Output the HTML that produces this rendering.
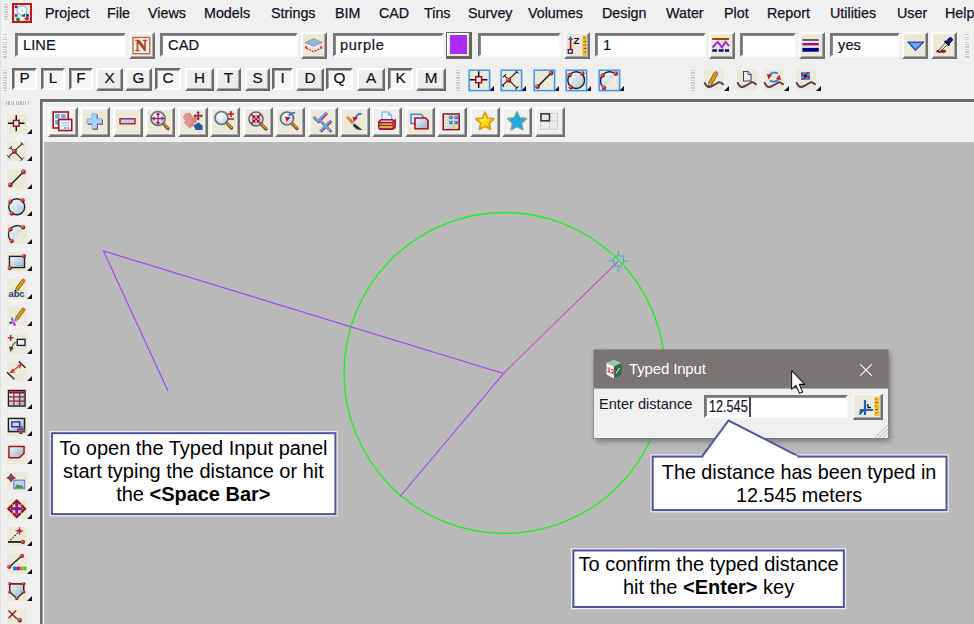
<!DOCTYPE html>
<html><head><meta charset="utf-8"><title>Typed Input</title>
<style>
html,body{margin:0;padding:0}
body{width:974px;height:624px;overflow:hidden;background:#f0f0f0;position:relative;font-family:"Liberation Sans",sans-serif;color:#000}
.a{position:absolute}
.menu span{position:absolute;top:4px;font-size:14.3px;line-height:18px;color:#12101e;white-space:nowrap;-webkit-text-stroke:.25px #12101e}
.grip{position:absolute;width:4px;background:repeating-linear-gradient(180deg,#c6c6c6 0,#cecece 1.200px,#f4f4f4 1.200px,#f4f4f4 2.500px)}
.gripH{position:absolute;height:5px;background:repeating-linear-gradient(90deg,#b2b2b2 0,#bcbcbc 1.200px,#f2f2f2 1.200px,#f2f2f2 2.400px)}
.inp{position:absolute;top:33px;height:20px;background:#fff;border:2px solid;border-color:#777 #fafafa #fafafa #777;box-shadow:inset 1px 1px 0 #8a8a8a;font-size:14.6px;line-height:21px;color:#12101e;-webkit-text-stroke:.2px #12101e;padding-left:6px;box-sizing:content-box;white-space:nowrap;letter-spacing:.1px}
.btn{position:absolute;box-sizing:border-box;background:#ece9d8;border:2px solid;border-color:#fdfdfd #727272 #727272 #fdfdfd;box-shadow:inset -1px -1px 0 #a8a8a8}
.btn.l{background:#f0f0f0}
.lb{position:absolute;top:68px;height:23px;box-sizing:border-box;font-size:15.3px;line-height:16px;text-align:center;color:#12101e;-webkit-text-stroke:.2px #12101e}
.lb.r{background:#ededed;border:2px solid;border-color:#fff #6a6a6a #6a6a6a #fff;box-shadow:inset -1px -1px 0 #a8a8a8;width:27px}
.lb.s{background:#f6f6f6;border:2px solid;border-color:#6a6a6a #fff #fff #6a6a6a;box-shadow:inset 1px 1px 0 #a8a8a8;width:25px;height:22px}
.ic{position:absolute;background:#ece9d8;width:20px;height:20px}
.tri{position:absolute;width:0;height:0;border-left:5px solid transparent;border-bottom:5px solid #111}
.snap{position:absolute;top:70px;width:21px;height:21px;box-sizing:border-box;border:2px solid #4a9cf6;background:#ece9d8}
.call{position:absolute;text-align:center;line-height:23px;color:#000;white-space:nowrap}
svg{position:absolute;overflow:visible}
</style></head><body>

<svg width="0" height="0" style="position:absolute"><defs>
<linearGradient id="gl" x1="0" y1="0" x2="1" y2="1"><stop offset="0" stop-color="#ffffff"/><stop offset="1" stop-color="#a9c4d6"/></linearGradient>
<linearGradient id="gl2" x1="0" y1="0" x2="1" y2="1"><stop offset="0" stop-color="#f4f9fc"/><stop offset="1" stop-color="#8fb0c6"/></linearGradient>
<radialGradient id="rb" cx=".35" cy=".35" r=".7"><stop offset="0" stop-color="#e8848c"/><stop offset=".55" stop-color="#b02838"/><stop offset="1" stop-color="#6a0c18"/></radialGradient>
<radialGradient id="lens" cx=".4" cy=".35" r=".7"><stop offset="0" stop-color="#ffffff"/><stop offset="1" stop-color="#b8d0e2"/></radialGradient>
<linearGradient id="star" x1="0" y1="0" x2="1" y2="1"><stop offset="0" stop-color="#fff9a0"/><stop offset=".5" stop-color="#ffe21a"/><stop offset="1" stop-color="#e8a800"/></linearGradient>
<linearGradient id="hand" x1="0" y1="0" x2="1" y2="1"><stop offset="0" stop-color="#f0b0a8"/><stop offset="1" stop-color="#c87870"/></linearGradient>
<linearGradient id="wood" x1="0" y1="0" x2="1" y2="0"><stop offset="0" stop-color="#e8a050"/><stop offset="1" stop-color="#9a5a20"/></linearGradient>
</defs></svg>
<div class="grip" style="left:3.500px;top:4px;height:16.500px"></div>
<div class="a" style="left:12px;top:3px;width:20px;height:20px;box-sizing:border-box;border:2px solid #cc1414;background:#e4f2f2"></div>
<svg style="left:14px;top:4px" width="16" height="16" viewBox="0 0 16 16" ><circle cx="8" cy="6.500" r="4.800" fill="#fbfdfd" stroke="#9cc4dc" stroke-width="1.600"/><rect x=".8" y="1.500" width="2.600" height="2.600" fill="#80108a"/><rect x=".8" y="10.200" width="2.600" height="2.600" fill="#80108a"/><rect x="12.200" y="10.200" width="2.600" height="2.600" fill="#101088"/><path d="M7 12.300L11 9.500L11 13Z" fill="#1a6a30"/><circle cx="4" cy="15.300" r="1.900" fill="#109020"/><path d="M12.800 12.500L15.300 14.800L12.800 17.100L10.300 14.800Z" fill="#f01010"/><circle cx="8.300" cy="7" r="1" fill="#b8d8b8"/></svg>
<div class="menu"><span style="left:45px">Project</span><span style="left:107px">File</span><span style="left:148px">Views</span><span style="left:204px">Models</span><span style="left:271px">Strings</span><span style="left:335px">BIM</span><span style="left:379px">CAD</span><span style="left:424px">Tins</span><span style="left:468px">Survey</span><span style="left:528px">Volumes</span><span style="left:602px">Design</span><span style="left:666px">Water</span><span style="left:724px">Plot</span><span style="left:767px">Report</span><span style="left:830px">Utilities</span><span style="left:897px">User</span><span style="left:945px">Help</span></div>
<div class="grip" style="left:3px;top:34px;height:24px"></div>
<div class="inp" style="left:15px;width:101px">LINE</div>
<div class="btn l" style="left:129px;top:32px;width:26px;height:27px"></div>
<svg style="left:132px;top:35px" width="20" height="20" viewBox="0 0 20 20" ><rect x="1" y="2.400" width="16.700" height="16.300" fill="#e9f0f3" stroke="#c8683a" stroke-width="1.400"/><text x="9.300" y="16.300" text-anchor="middle" font-family="Liberation Serif,serif" font-weight="bold" font-size="16.500" fill="#b84010" stroke="#b84010" stroke-width=".5">N</text></svg>
<div class="inp" style="left:160px;width:128px">CAD</div>
<div class="btn " style="left:301px;top:32px;width:26px;height:27px"></div>
<svg style="left:304px;top:35px" width="20" height="20" viewBox="0 0 20 20" ><path d="M1 12.500L9.700 8.600L18.400 12.500L9.700 16.700Z" fill="#f6e0e0" stroke="#e01020" stroke-width="1.200" stroke-dasharray="2.200 1"/><path d="M1 10L9.700 6.100L18.400 10L9.700 14Z" fill="#f4f6f8" stroke="#d0d4d8" stroke-width=".5"/><path d="M1 7.500L9.700 3.600L18.400 7.500L9.700 11.500Z" fill="#9cb4cc" stroke="#7890a8" stroke-width=".7"/></svg>
<div class="inp" style="left:333px;width:101px"><span style="letter-spacing:.65px;margin-left:-1px">purple</span></div>
<div class="a" style="left:446px;top:32px;width:26px;height:27px;box-sizing:border-box;background:#ece9d8;border:solid #666;border-width:1px 3px 3px 1px;box-shadow:inset 2px 2px 0 #fff"></div><div class="a" style="left:450px;top:35px;width:17px;height:19px;background:#a92cf8"></div>
<div class="inp" style="left:478px;width:73px"></div>
<div class="btn " style="left:564px;top:32px;width:26px;height:27px"></div>
<svg style="left:567px;top:35px" width="20" height="20" viewBox="0 0 20 20" ><path d="M3.600 14.500V4" stroke="#b01020" stroke-width="1.700"/><path d="M3.600 1L6.200 4.900H1Z" fill="#2a60d0"/><rect x="1.300" y="14.600" width="4" height="3.600" fill="#fff" stroke="#1020a0" stroke-width="1.300"/><path d="M.7 14.600h5.200" stroke="#b01020" stroke-width="1.300"/><text x="6.600" y="8.800" font-family="Liberation Sans,sans-serif" font-weight="bold" font-size="9.800" fill="#111">Z</text><rect x="15.600" y=".6" width="4.100" height="20.200" fill="#eeb838"/><path d="M16.500 3h2M16.500 6.500h3M16.500 10h2M16.500 13.500h3M16.500 17h2" stroke="#8a5a10" stroke-width=".9"/></svg>
<div class="inp" style="left:595px;width:101px">1</div>
<div class="btn " style="left:709px;top:32px;width:26px;height:27px"></div>
<svg style="left:712px;top:35px" width="20" height="20" viewBox="0 0 20 20" ><path d="M.2 4h16.800" stroke="#a04800" stroke-width="2"/><path d="M.5 12.500L5.600 6.900L10 12.300L13.500 6.900L17 11" fill="none" stroke="#a020f0" stroke-width="1.900"/><path d="M.3 15.400h4.600M6.700 15.400h4.900M13 15.400h4" stroke="#00008a" stroke-width="2.500"/></svg>
<div class="inp" style="left:740px;width:46px"></div>
<div class="btn " style="left:799px;top:32px;width:26px;height:27px"></div>
<svg style="left:802px;top:35px" width="20" height="20" viewBox="0 0 20 20" ><path d="M.4 5h16.400" stroke="#3a3a3a" stroke-width="1.500"/><path d="M.4 9.200h16.400" stroke="#a0109a" stroke-width="2.500"/><path d="M.4 14.800h16.400" stroke="#00008a" stroke-width="3.800"/></svg>
<div class="inp" style="left:830px;width:60px">yes</div>
<div class="btn " style="left:902px;top:32px;width:26px;height:27px"></div>
<svg style="left:905px;top:35px" width="20" height="20" viewBox="0 0 20 20" ><path d="M2.600 7H19L10.500 15.800Z" fill="#3a78e0" stroke="#1a3a90" stroke-width=".9"/><path d="M5.500 8.200H16L10.500 13.500Z" fill="#78a8f0"/></svg>
<div class="btn " style="left:931px;top:32px;width:26px;height:27px"></div>
<svg style="left:934px;top:35px" width="20" height="20" viewBox="0 0 20 20" ><ellipse cx="7.200" cy="16.200" rx="5" ry="1.600" fill="#a01020"/><path d="M4.400 15.800L12 7L14.200 9L6 16.500Z" fill="#f0f4f8" stroke="#333" stroke-width=".9"/><path d="M10.500 6L15.500 10.500" stroke="#111" stroke-width="1.800"/><path d="M12 6.500L15 3Q17.500 1.500 18.500 4Q19 5.500 17.500 6.500L14.500 9.500Z" fill="#101880" stroke="#080830" stroke-width=".7"/></svg>
<div class="grip" style="left:965px;top:34px;height:24px"></div>
<div class="grip" style="left:3px;top:70px;height:21px"></div>
<div class="lb s" style="left:12px;width:25px">P</div>
<div class="lb s" style="left:41px;width:24px">L</div>
<div class="lb s" style="left:69px;width:24px">F</div>
<div class="lb r" style="left:96px;width:27px">X</div>
<div class="lb r" style="left:125px;width:27px">G</div>
<div class="lb s" style="left:155px;width:26px">C</div>
<div class="lb r" style="left:185px;width:29px">H</div>
<div class="lb r" style="left:216px;width:25px">T</div>
<div class="lb r" style="left:245px;width:25px">S</div>
<div class="lb s" style="left:272px;width:21px">I</div>
<div class="lb r" style="left:296px;width:28px">D</div>
<div class="lb s" style="left:326px;width:27px">Q</div>
<div class="lb r" style="left:357px;width:28px">A</div>
<div class="lb s" style="left:388px;width:25px">K</div>
<div class="lb r" style="left:416px;width:30px">M</div>
<div class="grip" style="left:456px;top:70px;height:21px"></div>
<div class="ic" style="left:469px;top:70px;width:21px;height:21px"></div><div class="tri" style="left:489px;top:86px"></div>
<svg style="left:469.3px;top:70.3px" width="20.4" height="20.4" viewBox="0 0 20 20" ><path d="M9.500 1.300v16.400M1 9.500h17" stroke="#111" stroke-width="1.500" fill="none"/><rect x="6.600" y="6.600" width="5.800" height="5.800" fill="#eef6ff" stroke="#a01020" stroke-width="1.500"/><rect x=".2" y=".2" width="20" height="20" fill="none" stroke="#3d96f6" stroke-width="1.500"/></svg>
<div class="ic" style="left:501px;top:70px;width:21px;height:21px"></div><div class="tri" style="left:521px;top:86px"></div>
<svg style="left:501.3px;top:70.3px" width="20.4" height="20.4" viewBox="0 0 20 20" ><path d="M3.400 5.600L15.600 17.700M1.500 15.200L15.600 1.700" stroke="#222" stroke-width="1.100" fill="none"/><path d="M1.800 7.200L5 4M14 19.300L17.200 16.100M.2 13.500L3 16.800M14 .2L17.200 3.300" stroke="#222" stroke-width="1" fill="none"/><circle cx="7.5" cy="9.8" r="2.5" fill="url(#rb)"/><rect x=".2" y=".2" width="20" height="20" fill="none" stroke="#3d96f6" stroke-width="1.500"/></svg>
<div class="ic" style="left:534px;top:70px;width:21px;height:21px"></div><div class="tri" style="left:554px;top:86px"></div>
<svg style="left:534.3px;top:70.3px" width="20.4" height="20.4" viewBox="0 0 20 20" ><path d="M3.500 16.300L16.800 3" stroke="#222" stroke-width="1.500"/><circle cx="3.4" cy="16.3" r="2.4" fill="url(#rb)"/><circle cx="16.8" cy="3" r="2.4" fill="url(#rb)"/><rect x=".2" y=".2" width="20" height="20" fill="none" stroke="#3d96f6" stroke-width="1.500"/></svg>
<div class="ic" style="left:566px;top:70px;width:21px;height:21px"></div><div class="tri" style="left:586px;top:86px"></div>
<svg style="left:566.3px;top:70.3px" width="20.4" height="20.4" viewBox="0 0 20 20" ><circle cx="10" cy="10" r="8.200" fill="url(#gl)" stroke="#222" stroke-width="1.400"/><circle cx="3.5" cy="4.8" r="2.2" fill="url(#rb)"/><circle cx="16" cy="3.5" r="2.2" fill="url(#rb)"/><circle cx="4.8" cy="17" r="2.2" fill="url(#rb)"/><rect x=".2" y=".2" width="20" height="20" fill="none" stroke="#3d96f6" stroke-width="1.500"/></svg>
<div class="ic" style="left:599px;top:70px;width:21px;height:21px"></div><div class="tri" style="left:619px;top:86px"></div>
<svg style="left:599.3px;top:70.3px" width="20.4" height="20.4" viewBox="0 0 20 20" ><path d="M4.500 17.500 A8.500 8.500 0 0 1 16.500 4 Z" fill="url(#gl)"/><path d="M4.500 17.500 A8.500 8.500 0 0 1 16.500 4" fill="none" stroke="#222" stroke-width="1.400"/><circle cx="3.5" cy="5.5" r="2.2" fill="url(#rb)"/><circle cx="16.5" cy="3.5" r="2.2" fill="url(#rb)"/><circle cx="4.8" cy="17.5" r="2.2" fill="url(#rb)"/><rect x=".2" y=".2" width="20" height="20" fill="none" stroke="#3d96f6" stroke-width="1.500"/></svg>
<div class="grip" style="left:691px;top:70px;height:21px"></div>
<div class="ic" style="left:704px;top:70px"></div>
<div class="tri" style="left:724px;top:86px"></div>
<svg style="left:704px;top:70px" width="20" height="20" viewBox="0 0 20 20" ><g transform="translate(-1.500,1.500) scale(.95)"><path d="M6.500 11.500 L12.500 1 L16 3 L10 13.500 Z" fill="#dc9c18" stroke="#6a4208" stroke-width=".8"/><path d="M12.500 1 L13.500 -.8 L17 1.200 L16 3 Z" fill="#e06878"/><path d="M6.500 11.500 L10 13.500 L6 15.500 Z" fill="#e8c898" stroke="#6a4208" stroke-width=".4"/><path d="M6 15.500 L6.300 13.800 L7.600 14.600Z" fill="#111"/></g><path d="M.5 12.300 Q2.500 18.500 7 16.500 T13.800 12.800 T19.500 14.800" fill="none" stroke="#3a4458" stroke-width="2"/><path d="M.5 12.300 Q2.500 18.500 7 16.500 T13.800 12.800 T19.500 14.800" fill="none" stroke="#d02838" stroke-width=".9" stroke-dasharray="2 1.600"/></svg>
<div class="ic" style="left:737px;top:70px"></div>
<svg style="left:737px;top:70px" width="20" height="20" viewBox="0 0 20 20" ><path d="M6.500 1.500h4.500l3 3v6.500h-7.500z" fill="#eef4fa" stroke="#444" stroke-width="1.100"/><path d="M11 1.500v3h3" fill="#fff" stroke="#444" stroke-width=".9"/><path d="M.5 12.300 Q2.500 18.500 7 16.500 T13.800 12.800 T19.500 14.800" fill="none" stroke="#3a4458" stroke-width="2"/><path d="M.5 12.300 Q2.500 18.500 7 16.500 T13.800 12.800 T19.500 14.800" fill="none" stroke="#d02838" stroke-width=".9" stroke-dasharray="2 1.600"/></svg>
<div class="ic" style="left:764px;top:70px"></div>
<div class="tri" style="left:784px;top:86px"></div>
<svg style="left:764px;top:70px" width="20" height="20" viewBox="0 0 20 20" ><path d="M5.500 5.500 A5.500 4.500 0 0 1 14 3.500" fill="none" stroke="#3a78c8" stroke-width="1.800"/><path d="M14.500 9 A5.500 4.500 0 0 1 6 10.500" fill="none" stroke="#3a78c8" stroke-width="1.800"/><path d="M3 4L8 5L4.500 9.500Z" fill="#c02030"/><path d="M17 10L12 9L15.500 4.500Z" fill="#c02030"/><path d="M.5 12.300 Q2.500 18.500 7 16.500 T13.800 12.800 T19.500 14.800" fill="none" stroke="#3a4458" stroke-width="2"/><path d="M.5 12.300 Q2.500 18.500 7 16.500 T13.800 12.800 T19.500 14.800" fill="none" stroke="#d02838" stroke-width=".9" stroke-dasharray="2 1.600"/></svg>
<div class="ic" style="left:796px;top:70px"></div>
<div class="tri" style="left:816px;top:86px"></div>
<svg style="left:796px;top:70px" width="20" height="20" viewBox="0 0 20 20" ><g transform="translate(-.5 -1)"><path d="M10 7 L5.500 3 L10 3.200Z M10 7 L14.500 3 L14.300 7Z M10 7 L14.500 11 L10 10.800Z M10 7 L5.500 11 L5.700 7Z" fill="#18a0a8"/><path d="M10 7 L10 3.200 L14.500 3Z M10 7 L14.300 7 L14.500 11Z M10 7 L10 10.800 L5.500 11Z M10 7 L5.700 7 L5.500 3Z" fill="#a01890"/><circle cx="10" cy="7" r="1.400" fill="#111"/></g><path d="M.5 12.300 Q2.500 18.500 7 16.500 T13.800 12.800 T19.500 14.800" fill="none" stroke="#3a4458" stroke-width="2"/><path d="M.5 12.300 Q2.500 18.500 7 16.500 T13.800 12.800 T19.500 14.800" fill="none" stroke="#d02838" stroke-width=".9" stroke-dasharray="2 1.600"/></svg>
<div class="gripH" style="left:6px;top:101px;width:24px;height:4px"></div><div class="a" style="left:0;top:0;width:1px;height:624px;background:#e2e2e2"></div>
<div class="ic" style="left:6.500px;top:114.0px;height:19.500px"></div>
<div class="tri" style="left:26.500px;top:128.5px"></div>
<svg style="left:6.5px;top:114.0px" width="19.5" height="19.5" viewBox="0 0 20 20" ><path d="M9.500 1.300v16.400M1 9.500h17" stroke="#111" stroke-width="1.500" fill="none"/><rect x="6.600" y="6.600" width="5.800" height="5.800" fill="#eef6ff" stroke="#a01020" stroke-width="1.500"/></svg>
<div class="ic" style="left:6.500px;top:141.5px;height:19.500px"></div>
<div class="tri" style="left:26.500px;top:156.0px"></div>
<svg style="left:6.5px;top:141.5px" width="19.5" height="19.5" viewBox="0 0 20 20" ><path d="M3.400 5.600L15.600 17.700M1.500 15.200L15.600 1.700" stroke="#222" stroke-width="1.100" fill="none"/><path d="M1.800 7.200L5 4M14 19.300L17.200 16.100M.2 13.500L3 16.800M14 .2L17.200 3.300" stroke="#222" stroke-width="1" fill="none"/><circle cx="7.5" cy="9.8" r="2.5" fill="url(#rb)"/></svg>
<div class="ic" style="left:6.500px;top:169.0px;height:19.500px"></div>
<div class="tri" style="left:26.500px;top:183.5px"></div>
<svg style="left:6.5px;top:169.0px" width="19.5" height="19.5" viewBox="0 0 20 20" ><path d="M3.500 16.300L16.800 3" stroke="#222" stroke-width="1.500"/><circle cx="3.4" cy="16.3" r="2.4" fill="url(#rb)"/><circle cx="16.8" cy="3" r="2.4" fill="url(#rb)"/></svg>
<div class="ic" style="left:6.500px;top:196.6px;height:19.500px"></div>
<div class="tri" style="left:26.500px;top:211.1px"></div>
<svg style="left:6.5px;top:196.6px" width="19.5" height="19.5" viewBox="0 0 20 20" ><circle cx="10" cy="10" r="8.200" fill="url(#gl)" stroke="#222" stroke-width="1.400"/><circle cx="3.5" cy="4.8" r="2.2" fill="url(#rb)"/><circle cx="16" cy="3.5" r="2.2" fill="url(#rb)"/><circle cx="4.8" cy="17" r="2.2" fill="url(#rb)"/></svg>
<div class="ic" style="left:6.500px;top:224.1px;height:19.500px"></div>
<div class="tri" style="left:26.500px;top:238.6px"></div>
<svg style="left:6.5px;top:224.1px" width="19.5" height="19.5" viewBox="0 0 20 20" ><path d="M4.500 17.500 A8.500 8.500 0 0 1 16.500 4 Z" fill="url(#gl)"/><path d="M4.500 17.500 A8.500 8.500 0 0 1 16.500 4" fill="none" stroke="#222" stroke-width="1.400"/><circle cx="3.5" cy="5.5" r="2.2" fill="url(#rb)"/><circle cx="16.5" cy="3.5" r="2.2" fill="url(#rb)"/><circle cx="4.8" cy="17.5" r="2.2" fill="url(#rb)"/></svg>
<div class="ic" style="left:6.500px;top:251.6px;height:19.500px"></div>
<div class="tri" style="left:26.500px;top:266.1px"></div>
<svg style="left:6.5px;top:251.6px" width="19.5" height="19.5" viewBox="0 0 20 20" ><rect x="2.500" y="4.500" width="15.500" height="11.500" fill="url(#gl2)" stroke="#222" stroke-width="1.400"/><circle cx="17.3" cy="4.2" r="2.2" fill="url(#rb)"/><circle cx="2.8" cy="16.5" r="2.2" fill="url(#rb)"/></svg>
<div class="ic" style="left:6.500px;top:279.1px;height:19.500px"></div>
<div class="tri" style="left:26.500px;top:293.6px"></div>
<svg style="left:6.5px;top:279.1px" width="19.5" height="19.5" viewBox="0 0 20 20" ><path d="M9 9.500 L15.500 .5 L18.300 2.300 L11.600 11.500 Z" fill="#dc9c18" stroke="#6a4208" stroke-width=".7"/><path d="M15.500 .5 L16.500 -.8 L19.200 1 L18.300 2.300 Z" fill="#e06878"/><path d="M9 9.500 L11.600 11.500 L8 13 Z" fill="#e8c898" stroke="#6a4208" stroke-width=".4"/><path d="M8 13 L8.700 11.200 L10 12.200Z" fill="#111"/><text x="1.500" y="18" font-family="Liberation Sans,sans-serif" font-size="9.500" font-weight="bold" fill="#1a3a6a" textLength="16.500" lengthAdjust="spacingAndGlyphs">abc</text></svg>
<div class="ic" style="left:6.500px;top:306.6px;height:19.500px"></div>
<div class="tri" style="left:26.500px;top:321.1px"></div>
<svg style="left:6.5px;top:306.6px" width="19.5" height="19.5" viewBox="0 0 20 20" ><g transform="translate(0 1)"><path d="M9 9.500 L15.500 .5 L18.300 2.300 L11.600 11.500 Z" fill="#dc9c18" stroke="#6a4208" stroke-width=".7"/><path d="M15.500 .5 L16.500 -.8 L19.200 1 L18.300 2.300 Z" fill="#e06878"/><path d="M9 9.500 L11.600 11.500 L8 13 Z" fill="#e8c898" stroke="#6a4208" stroke-width=".4"/><path d="M8 13 L8.700 11.200 L10 12.200Z" fill="#111"/></g><path d="M6.500 15 Q3 13 4.500 10.500 Q7.500 11 6.500 15Z" fill="#2a90f0"/><path d="M6.500 15 Q8.500 11.500 11 13 Q10.500 16 6.500 15Z" fill="#e068c0"/><path d="M6.500 15 Q10 17 8.500 19.500 Q5.500 19 6.500 15Z" fill="#c020d0"/><path d="M6.500 15 Q4.500 18.500 2 17 Q2.500 14 6.500 15Z" fill="#5028a0"/></svg>
<div class="ic" style="left:6.500px;top:334.2px;height:19.500px"></div>
<div class="tri" style="left:26.500px;top:348.7px"></div>
<svg style="left:6.5px;top:334.2px" width="19.5" height="19.5" viewBox="0 0 20 20" ><path d="M.8 4h6M3.800 1v6" stroke="#a01828" stroke-width="1.400"/><rect x="10.500" y="5.500" width="8" height="6.200" fill="#e4f0f8" stroke="#222" stroke-width="1.400"/><path d="M10 8.200 Q6.500 8.800 4.500 15" fill="none" stroke="#444" stroke-width="1.200"/><path d="M2 12.500 L3.500 18.500 L7 14Z" fill="#444"/></svg>
<div class="ic" style="left:6.500px;top:361.7px;height:19.500px"></div>
<div class="tri" style="left:26.500px;top:376.2px"></div>
<svg style="left:6.5px;top:361.7px" width="19.5" height="19.5" viewBox="0 0 20 20" ><path d="M0 10.500L7.500 17.800M12 -.5L19 6" stroke="#222" stroke-width="1.400"/><path d="M4 10.500L14 3" stroke="#c82030" stroke-width="1.100"/><path d="M6.500 7L3.500 10.800L8.300 10.300M11.200 3.300L14.500 2.700L12.800 6.500" fill="none" stroke="#c82030" stroke-width="1.100"/></svg>
<div class="ic" style="left:6.500px;top:389.2px;height:19.500px"></div>
<div class="tri" style="left:26.500px;top:403.7px"></div>
<svg style="left:6.5px;top:389.2px" width="19.5" height="19.5" viewBox="0 0 20 20" ><rect x="1.500" y="1.500" width="17" height="16" fill="url(#gl2)" stroke="#222" stroke-width="1.400"/><path d="M2.200 3.500h15.600" stroke="#901020" stroke-width="2.200"/><path d="M2 8h16M2 12.500h16" stroke="#a01828" stroke-width="1.300"/><path d="M7 2.500v15M13 2.500v15" stroke="#a01828" stroke-width="1.200"/></svg>
<div class="ic" style="left:6.500px;top:416.7px;height:19.500px"></div>
<div class="tri" style="left:26.500px;top:431.2px"></div>
<svg style="left:6.5px;top:416.7px" width="19.5" height="19.5" viewBox="0 0 20 20" ><rect x="1.500" y="1.500" width="16.500" height="13.500" fill="url(#gl2)" stroke="#222" stroke-width="1.500"/><rect x="5" y="5" width="8" height="5" fill="none" stroke="#2030a0" stroke-width="1.400"/><path d="M14.300 9.500v8M10.300 13.500h8" stroke="#c01828" stroke-width="3.400"/><path d="M14.300 10.500v6M11.300 13.500h6" stroke="#3a7ad0" stroke-width="1.700"/></svg>
<div class="ic" style="left:6.500px;top:444.2px;height:19.500px"></div>
<div class="tri" style="left:26.500px;top:458.7px"></div>
<svg style="left:6.5px;top:444.2px" width="19.5" height="19.5" viewBox="0 0 20 20" ><path d="M2 2.500H17.500V9.500L12.800 14H2Z" fill="url(#gl2)" stroke="#a01828" stroke-width="1.500" stroke-linejoin="round"/></svg>
<div class="ic" style="left:6.500px;top:471.8px;height:19.500px"></div>
<div class="tri" style="left:26.500px;top:486.3px"></div>
<svg style="left:6.5px;top:471.8px" width="19.5" height="19.5" viewBox="0 0 20 20" ><path d="M4.200 1.500v9M-.3 6h9" stroke="#a01828" stroke-width="1.200"/><path d="M4.200 2.800L7.400 6L4.200 9.200L1 6Z" fill="none" stroke="#a01828" stroke-width="1.100"/><rect x="3" y="4.800" width="2.400" height="2.400" fill="#2050b0"/><rect x="7" y="8.500" width="11" height="8.500" fill="#c0d4f8" stroke="#8088c8" stroke-width="1.400"/><path d="M7.800 16.300 L10.500 12.300 L12.800 14.200 L14.500 12.800 L17.200 16.300Z" fill="#40a030"/></svg>
<div class="ic" style="left:6.500px;top:499.3px;height:19.500px"></div>
<div class="tri" style="left:26.500px;top:513.8px"></div>
<svg style="left:6.5px;top:499.3px" width="19.5" height="19.5" viewBox="0 0 20 20" ><path d="M10 4v12M4 10h12" stroke="#8a1890" stroke-width="3"/><path d="M6 5.500L10 1.500L14 5.500M6 14.500L10 18.500L14 14.500M5.500 6L1.500 10L5.500 14M14.500 6L18.500 10L14.500 14" fill="none" stroke="#98141f" stroke-width="2.300" stroke-linejoin="miter"/></svg>
<div class="ic" style="left:6.500px;top:526.8px;height:19.500px"></div>
<div class="tri" style="left:26.500px;top:541.3px"></div>
<svg style="left:6.5px;top:526.8px" width="19.5" height="19.5" viewBox="0 0 20 20" ><path d="M3.500 13.500L11 6" stroke="#222" stroke-width="1.200" stroke-dasharray="1.500 1.500"/><path d="M12.800 .3v7.600M9 4.100h7.600" stroke="#a01828" stroke-width="1"/><path d="M12.800 1.800L15.100 4.100L12.800 6.400L10.500 4.100Z" fill="#c82030" stroke="#a01828" stroke-width=".6"/><path d="M1 15.300H15" stroke="#111" stroke-width="1.700"/><circle cx="16.3" cy="15.4" r="2.2" fill="url(#rb)"/></svg>
<div class="ic" style="left:6.500px;top:554.3px;height:19.500px"></div>
<div class="tri" style="left:26.500px;top:568.8px"></div>
<svg style="left:6.5px;top:554.3px" width="19.5" height="19.5" viewBox="0 0 20 20" ><path d="M2.500 13L15 2" stroke="#222" stroke-width="1.400"/><circle cx="15.2" cy="2" r="2.2" fill="url(#rb)"/><circle cx="2.3" cy="13.2" r="2.2" fill="url(#rb)"/><rect x="6.200" y="13" width="3.500" height="3.700" fill="#1070f0"/><rect x="9.700" y="13" width="3.500" height="3.700" fill="#9018a0"/><rect x="13.200" y="13" width="3.600" height="3.700" fill="#f07030"/><rect x="16.800" y="13" width="3.200" height="3.700" fill="#20e020"/></svg>
<div class="ic" style="left:6.500px;top:581.8px;height:19.500px"></div>
<div class="tri" style="left:26.500px;top:596.3px"></div>
<svg style="left:6.5px;top:581.8px" width="19.5" height="19.5" viewBox="0 0 20 20" ><path d="M2.800 1.800H17.200V10.200L10 16.800L2.800 10.200Z" fill="url(#gl2)" stroke="#222" stroke-width="1.400"/><path d="M2.800 1.800H17.200" stroke="#a01828" stroke-width="1.600"/><circle cx="2.8" cy="1.8" r="1.7" fill="url(#rb)"/><circle cx="17.2" cy="1.8" r="1.7" fill="url(#rb)"/><circle cx="2.8" cy="10.2" r="1.7" fill="url(#rb)"/><circle cx="17.2" cy="10.2" r="1.7" fill="url(#rb)"/><circle cx="10" cy="16.8" r="1.7" fill="url(#rb)"/></svg>
<div class="ic" style="left:6.500px;top:609.4px;height:19.500px"></div>
<svg style="left:6.5px;top:609.4px" width="19.5" height="19.5" viewBox="0 0 20 20" ><path d="M1.500 1.500L9.500 9.500M9.500 1.500L1.500 9.500" stroke="#a01828" stroke-width="1.500"/><path d="M9 9L12.500 11" stroke="#a01828" stroke-width="1.200"/><circle cx="13" cy="11.5" r="2.3" fill="url(#rb)"/></svg>
<div class="a" style="left:40px;top:99px;width:940px;height:530px;box-sizing:border-box;border:solid #6c6c6c;border-width:3px 0 0 2px;background:#f0f0f0"><div class="a" style="left:0;top:0;width:940px;height:1px;background:#fdfdfd"></div><div class="a" style="left:0;top:0;width:1px;height:530px;background:#9e9e9e"></div><div class="a" style="left:1px;top:0;width:1px;height:530px;background:#fdfdfd"></div></div>
<div class="a" style="left:44px;top:142px;width:930px;height:482px;background:#bababa"></div>
<div class="btn l" style="left:48px;top:107px;width:30px;height:30px"></div>
<svg style="left:51.8px;top:110.2px" width="20" height="20" viewBox="0 0 20 20" ><g transform="translate(.2 1)"><rect x="1" y="1" width="15" height="16" fill="#f4f4fa" stroke="#a81018" stroke-width="1.600"/><rect x="3" y="3" width="4.500" height="4.500" fill="#78a8e0"/><rect x="9" y="3" width="4.500" height="4.500" fill="#78a8e0"/><rect x="3" y="9" width="4.500" height="4.500" fill="#78a8e0"/><rect x="6.500" y="8.500" width="13" height="11" fill="#fbfcff" stroke="#a81018" stroke-width="1.600"/><path d="M9 12h8M9 14.500h8" stroke="#b8cce8" stroke-width="1.500"/><path d="M12 17h6" stroke="#4a80d0" stroke-width="1.500" stroke-dasharray="2 1"/></g></svg>
<div class="btn l" style="left:80px;top:107px;width:30px;height:30px"></div>
<div class="a" style="left:83px;top:110px;width:23px;height:23px;background:#ece9d8"></div>
<svg style="left:83.8px;top:110.2px" width="20" height="20" viewBox="0 0 20 20" ><g transform="translate(.5 .8)"><path d="M7.500 3h5v5h5v5h-5v5h-5v-5h-5v-5h5z" fill="#a01018" transform="translate(.9 .9)"/><path d="M7.500 3h5v5h5v5h-5v5h-5v-5h-5v-5h5z" fill="#a8d4f8" stroke="#6aa4e0" stroke-width=".7"/></g></svg>
<div class="btn l" style="left:113px;top:107px;width:30px;height:30px"></div>
<div class="a" style="left:116px;top:110px;width:23px;height:23px;background:#ece9d8"></div>
<svg style="left:116.8px;top:110.2px" width="20" height="20" viewBox="0 0 20 20" ><rect x="3" y="8.800" width="15" height="5" fill="#a8d4f8" stroke="#b01020" stroke-width="1.300"/></svg>
<div class="btn l" style="left:145px;top:107px;width:30px;height:30px"></div>
<div class="a" style="left:148px;top:110px;width:23px;height:23px;background:#ece9d8"></div>
<svg style="left:148.8px;top:110.2px" width="20" height="20" viewBox="0 0 20 20" ><path d="M13.2 12.7L19 18.5" stroke="#7a4a18" stroke-width="3.200" stroke-linecap="round"/><path d="M13.6 12.7L19 18.1" stroke="#e09850" stroke-width="1.400" stroke-linecap="round"/><circle cx="9" cy="8.5" r="7" fill="url(#lens)" stroke="#6a7078" stroke-width="1.700"/><path d="M9 3.500v10M4 8.500h10" stroke="#b01868" stroke-width="1.300"/><path d="M9 2L11.200 5H6.800Z M9 15L11.200 12H6.800Z M2.500 8.500L5.500 6.300V10.700Z M15.500 8.500L12.500 6.300V10.700Z" fill="#b01868"/></svg>
<div class="btn l" style="left:178px;top:107px;width:30px;height:30px"></div>
<div class="a" style="left:181px;top:110px;width:23px;height:23px;background:#ece9d8"></div>
<svg style="left:181.8px;top:110.2px" width="20" height="20" viewBox="0 0 20 20" ><g transform="translate(-1.300 1.600) rotate(-38 8 9) scale(1.050)"><path d="M4 14.500 L3.200 8.500 Q3 7 4.200 7 Q5.200 7 5.400 8.300 L5.300 3.800 Q5.300 2.500 6.500 2.500 Q7.600 2.500 7.700 3.800 L7.800 2.600 Q7.900 1.300 9.100 1.300 Q10.300 1.400 10.300 2.700 L10.400 4 Q10.600 2.800 11.700 2.900 Q12.800 3 12.800 4.300 L12.600 9.500 Q14 8.300 15 9 Q15.800 9.700 15 10.800 L11.500 15.500 Z" fill="url(#hand)" stroke="#b87068" stroke-width=".5"/><path d="M7.700 4v4M10.300 4.500v3.800" stroke="#c88078" stroke-width=".5"/></g><path d="M11.500 14.800 L16.500 12.200 L20.500 15.500 L20.500 20 L13.500 20 Z" fill="#2a5aa0"/><path d="M11.800 14.500 L16.300 12" stroke="#e8eef8" stroke-width="1.200"/><g transform="translate(0 1.300)"><path d="M16.200 .5v8M12.200 4.500h8" stroke="#b01020" stroke-width="1.300"/><path d="M16.200 -.3L18 2H14.400Z M16.200 9.300L18 7H14.400Z M11.400 4.500L13.700 2.700V6.300Z M21 4.500L18.700 2.700V6.300Z" fill="#b01020"/><path d="M16.200 2.200L18.500 4.500L16.200 6.800L13.900 4.500Z" fill="none" stroke="#3060b0" stroke-width=".7"/></g></svg>
<div class="btn l" style="left:210px;top:107px;width:30px;height:30px"></div>
<div class="a" style="left:213px;top:110px;width:23px;height:23px;background:#ece9d8"></div>
<svg style="left:213.8px;top:110.2px" width="20" height="20" viewBox="0 0 20 20" ><path d="M11.7 12.2L17.5 18" stroke="#7a4a18" stroke-width="3.200" stroke-linecap="round"/><path d="M12.1 12.2L17.5 17.6" stroke="#e09850" stroke-width="1.400" stroke-linecap="round"/><circle cx="7.5" cy="8" r="6.5" fill="url(#lens)" stroke="#6a7078" stroke-width="1.700"/><path d="M17 1v6M14 4h6M14 9h6" stroke="#c01020" stroke-width="1.500"/></svg>
<div class="btn l" style="left:243px;top:107px;width:30px;height:30px"></div>
<div class="a" style="left:246px;top:110px;width:23px;height:23px;background:#ece9d8"></div>
<svg style="left:246.8px;top:110.2px" width="20" height="20" viewBox="0 0 20 20" ><path d="M13.2 13.2L19 19" stroke="#7a4a18" stroke-width="3.200" stroke-linecap="round"/><path d="M13.6 13.2L19 18.6" stroke="#e09850" stroke-width="1.400" stroke-linecap="round"/><circle cx="9" cy="9" r="7" fill="url(#lens)" stroke="#6a7078" stroke-width="1.700"/><path d="M4.300 4.300l3 3M13.700 4.300l-3 3M4.300 13.700l3-3M13.700 13.700l-3-3" stroke="#b01020" stroke-width="1.600"/><path d="M8.400 8.400H4.400L8.400 4.400Z M9.600 8.400H13.600L9.600 4.400Z M8.400 9.600H4.400L8.400 13.600Z M9.600 9.600H13.600L9.600 13.600Z" fill="#b01020"/><circle cx="9" cy="9" r=".9" fill="#223"/></svg>
<div class="btn l" style="left:275px;top:107px;width:30px;height:30px"></div>
<div class="a" style="left:278px;top:110px;width:23px;height:23px;background:#ece9d8"></div>
<svg style="left:278.8px;top:110.2px" width="20" height="20" viewBox="0 0 20 20" ><path d="M12.2 12.7L18 18.5" stroke="#7a4a18" stroke-width="3.200" stroke-linecap="round"/><path d="M12.6 12.7L18 18.1" stroke="#e09850" stroke-width="1.400" stroke-linecap="round"/><circle cx="8" cy="8.5" r="6.5" fill="url(#lens)" stroke="#6a7078" stroke-width="1.700"/><path d="M6 6.500 L11.500 7.500 L7.500 12 Z" fill="#c01828"/><path d="M9.500 6 Q12 2.500 16 3" fill="none" stroke="#3a80c8" stroke-width="1.800"/></svg>
<div class="btn l" style="left:308px;top:107px;width:30px;height:30px"></div>
<div class="a" style="left:311px;top:110px;width:23px;height:23px;background:#ece9d8"></div>
<svg style="left:311.8px;top:110.2px" width="20" height="20" viewBox="0 0 20 20" ><g transform="translate(-.8 .6) scale(1.080)"><path d="M2 5.500L6 9.500L14 1.500" fill="none" stroke="#c03040" stroke-width="2.600" transform="translate(.7 .8)"/><path d="M2 5.500L6 9.500L14 1.500" fill="none" stroke="#68a8e8" stroke-width="2"/><path d="M8 9L18 19M18 9L8 19" stroke="#c03040" stroke-width="2.600" transform="translate(.7 .7)"/><path d="M8 9L18 19M18 9L8 19" stroke="#68a8e8" stroke-width="2"/></g></svg>
<div class="btn l" style="left:340px;top:107px;width:30px;height:30px"></div>
<div class="a" style="left:343px;top:110px;width:23px;height:23px;background:#ece9d8"></div>
<svg style="left:343.8px;top:110.2px" width="20" height="20" viewBox="0 0 20 20" ><g transform="translate(0 1.200)"><path d="M3 5.500L10 13" stroke="url(#wood)" stroke-width="3"/><path d="M3 5.500L10 13" stroke="#d88838" stroke-width="1.200"/><path d="M8.500 11.500L11 14" stroke="#c8ccd0" stroke-width="3.400"/><path d="M10 12.500 L13.500 14.500 L18.500 19 L12.500 18 L9 14.500Z" fill="#303030"/><path d="M17.500 2.500 Q12.500 2.500 11.500 7.500" fill="none" stroke="#3a80c8" stroke-width="2"/><path d="M8.500 5.500 L14 6.500 L10 10.500Z" fill="#c01828"/></g></svg>
<div class="btn l" style="left:372px;top:107px;width:30px;height:30px"></div>
<svg style="left:375.8px;top:110.2px" width="20" height="20" viewBox="0 0 20 20" ><g transform="translate(-.3 .4) scale(1.060 1.100)"><path d="M6 1.500h6l3 3v5h-9z" fill="#e8f2ff" stroke="#78a8e8" stroke-width="1"/><path d="M12 1.500v3h3" fill="#a8c8f8" stroke="#78a8e8" stroke-width=".8"/><path d="M3 10.500L5 8.500H16L18 10.500V16H3Z" fill="#e8e0d0" stroke="#b01020" stroke-width="1.500"/><rect x="3" y="11" width="13" height="3" fill="#a8a8a8" stroke="#b01020" stroke-width="1.200"/><rect x="4" y="11.500" width="2" height="1.500" fill="#20c020"/><path d="M3.500 15.500h13" stroke="#e8c020" stroke-width="1.600"/><path d="M3 17h14" stroke="#b01020" stroke-width="1.600"/><path d="M16 10.500L18.500 8.500V14L16 16" fill="#d04040" stroke="#b01020" stroke-width="1"/></g></svg>
<div class="btn l" style="left:405px;top:107px;width:30px;height:30px"></div>
<div class="a" style="left:408px;top:110px;width:23px;height:23px;background:#ece9d8"></div>
<svg style="left:408.8px;top:110.2px" width="20" height="20" viewBox="0 0 20 20" ><path d="M2 4.300H12L14.500 6.800V13.500H2Z" fill="#dce8f4" stroke="#4a88d0" stroke-width="1.500"/><path d="M6 8H16.500L19 10.500V18.700H6Z" fill="url(#gl2)" stroke="#b01020" stroke-width="1.600"/></svg>
<div class="btn l" style="left:437px;top:107px;width:30px;height:30px"></div>
<svg style="left:440.8px;top:110.2px" width="20" height="20" viewBox="0 0 20 20" ><g transform="translate(.8 2.600) scale(.94 .92)"><rect x="1.500" y="1.500" width="17" height="17" fill="#c8dcf0" stroke="#8a1018" stroke-width="1.600"/><rect x="2.500" y="2.500" width="3" height="15" fill="#e8f0f8"/><path d="M3.800 4v13" stroke="#e8c020" stroke-width="1.600" stroke-dasharray="1.800 1.500"/><rect x="8" y="3.500" width="3.500" height="3.500" fill="#3a68b0"/><rect x="13.500" y="3.500" width="3.500" height="3.500" fill="#3a68b0"/><rect x="8" y="9" width="3.500" height="3.500" fill="#3a68b0"/><rect x="13.500" y="9" width="3.500" height="3.500" fill="#3a68b0"/><rect x="11" y="14" width="3.500" height="4" fill="#f0d020"/><circle cx="9.500" cy="5" r=".8" fill="#e8d040"/><circle cx="15" cy="5" r=".8" fill="#e8d040"/><circle cx="9.500" cy="10.500" r=".8" fill="#e8d040"/><circle cx="15" cy="10.500" r=".8" fill="#e8d040"/></g></svg>
<div class="btn l" style="left:470px;top:107px;width:30px;height:30px"></div>
<svg style="left:473.8px;top:110.2px" width="20" height="20" viewBox="0 0 20 20" ><path d="M11.00 2.20L13.65 8.06L20.04 8.76L15.28 13.09L16.58 19.39L11.00 16.20L5.42 19.39L6.72 13.09L1.96 8.76L8.35 8.06Z" fill="url(#star)" stroke="#d8a018" stroke-width="1.800" stroke-linejoin="round"/></svg>
<div class="btn l" style="left:502px;top:107px;width:30px;height:30px"></div>
<svg style="left:505.8px;top:110.2px" width="20" height="20" viewBox="0 0 20 20" ><path d="M11.00 2.20L13.65 8.06L20.04 8.76L15.28 13.09L16.58 19.39L11.00 16.20L5.42 19.39L6.72 13.09L1.96 8.76L8.35 8.06Z" fill="#20a8e0" stroke="#20a8e0" stroke-width="1.800" stroke-linejoin="round"/><path d="M11.00 2.20L13.65 8.06L20.04 8.76L15.28 13.09L16.58 19.39L11.00 16.20L5.42 19.39L6.72 13.09L1.96 8.76L8.35 8.06Z" fill="none" stroke="#c8a858" stroke-width=".7" stroke-linejoin="round" transform="translate(11 11.700) scale(1.120) translate(-11 -11.700)"/></svg>
<div class="btn l" style="left:535px;top:107px;width:30px;height:30px"></div>
<svg style="left:538.8px;top:110.2px" width="20" height="20" viewBox="0 0 20 20" ><g transform="translate(0 1.800)"><rect x="1.500" y="1.500" width="17" height="16" fill="#ebebeb" stroke="#d0d0d0" stroke-width="1"/><path d="M10.500 1.500v16M1.500 9h17" stroke="#cfcfcf" stroke-width="1"/><rect x="2" y="2" width="8.500" height="7" fill="#e4e4e4" stroke="#3a3a3a" stroke-width="1.600"/></g></svg>
<svg style="left:0;top:0" width="974" height="624" viewBox="0 0 974 624">
  <circle cx="504.500" cy="373" r="160.500" fill="none" stroke="#22ee22" stroke-width="1.350"/>
  <path d="M168 391 L103.500 251 L503.500 373.500 L400 496.500" fill="none" stroke="#a646f0" stroke-width="1.150"/>
  <path d="M503.500 373.500 L618 261.500" fill="none" stroke="#c656c6" stroke-width="1.100"/>
  <g stroke="#48b0c2" stroke-width="1.200" fill="none"><rect x="613.700" y="256" width="9.800" height="10.200"/><path d="M618.500 250.500v5.500M618.500 266.200v5.500M608 261h5.700M623.500 261h5.700"/></g><circle cx="613.800" cy="255.900" r="1" fill="#e8e020"/><circle cx="623.300" cy="265.800" r="1" fill="#e8e020"/>
</svg>
<svg style="left:0;top:0" width="974" height="624"><rect x="50.4" y="431.7" width="286.5" height="83.90000000000003" fill="none" stroke="#fff" stroke-opacity=".75" stroke-width="1.600"/><rect x="51.9" y="433.2" width="283.5" height="80.90000000000003" fill="#fff" stroke="#4f55a2" stroke-width="2"/></svg><div class="call" style="left:50.6px;width:285.5px;top:436.8px;font-size:19.98px">To open the Typed Input panel<br>start typing the distance or hit<br>the <b>&lt;Space Bar&gt;</b></div><svg style="left:0;top:0" width="974" height="624"><rect x="571.9" y="549.0" width="273.4" height="59.5" fill="none" stroke="#fff" stroke-opacity=".75" stroke-width="1.600"/><rect x="573.4" y="550.5" width="270.4" height="56.5" fill="#fff" stroke="#4f55a2" stroke-width="2"/></svg><div class="call" style="left:572.4px;width:272.4px;top:553.3px;font-size:20px">To confirm the typed distance<br>hit the <b>&lt;Enter&gt;</b> key</div>
<div class="a" id="dlg" style="left:594px;top:350px;width:294px;height:88px;background:#f0f0f0;box-shadow:0 0 0 1px rgba(120,120,120,.55),2px 3px 6px rgba(0,0,0,.4)">
  <div class="a" style="left:0;top:0;width:294px;height:38px;background:#7a7474"></div><div class="a" style="left:0;top:38px;width:294px;height:1px;background:#aaa7a7"></div>
  <svg style="left:12px;top:9px" width="16" height="20" viewBox="0 0 16 20"><path d="M8 .5L15.500 4L8 7.500L.5 4Z" fill="#9ec8a8"/><path d="M.5 4L8 7.500V19.500L.5 15.500Z" fill="#f6f6f6"/><path d="M8 7.500L15.500 4V15.500L8 19.500Z" fill="#2f6a4a"/><text x="1" y="14.500" font-family="Liberation Sans,sans-serif" font-weight="bold" font-size="7" fill="#d01020" transform="skewY(25) translate(0 -2.500)">12</text><path d="M10 14.500L13.500 9" stroke="#e8e8e8" stroke-width="1"/></svg>
  <div class="a" style="left:35px;top:9px;font-size:15px;line-height:20px;color:#fff;white-space:nowrap;letter-spacing:-.15px">Typed Input</div>
  <svg style="left:266px;top:14px" width="12" height="12"><path d="M.3 .3L11.700 11.700M11.700 .3L.3 11.700" stroke="#fff" stroke-width="1.100" fill="none"/></svg>
  <div class="a" style="left:5px;top:44.500px;font-size:14.6px;line-height:18px;color:#15152a;white-space:nowrap">Enter distance</div>
  <div class="inp" style="left:110px;top:45px;width:137px;height:19px;padding-left:3px;font-size:16px;line-height:20px;letter-spacing:0"><span style="display:inline-block;transform:scaleX(.79);transform-origin:0 50%">12.545</span></div>
  <div class="a" style="left:155px;top:47px;width:1.500px;height:20px;background:#4a4a4a"></div>
  <div class="btn" style="left:259px;top:44px;width:30px;height:26px;border-width:1px 2px 2px 1px"></div>
  <svg style="left:263px;top:46px" width="24" height="21" viewBox="0 0 24 21"><rect x="17.500" y="1" width="5" height="19" fill="#f0c040"/><path d="M18 3h2M18 6.500h3M18 10h2M18 13.500h3M18 17h2" stroke="#8a5a10" stroke-width=".9"/><path d="M8 4v15M3 14h13" stroke="#1f5fb0" stroke-width="2.200"/><path d="M2 19L8 13L3 13Z" fill="#1f5fb0"/><path d="M2.500 18.500L7.500 13.500" stroke="#1f5fb0" stroke-width="1.600"/><path d="M11 8v3.500h3" fill="none" stroke="#111" stroke-width="1.300"/></svg>
  <svg style="left:280px;top:74px" width="14" height="14"><path d="M1 14L14 1M5 14L14 5M9 14L14 9" stroke="#c4c4c4" stroke-width="1.200"/><path d="M2.200 14L14 2.200M6.200 14L14 6.200M10.200 14L14 10.200" stroke="#fafafa" stroke-width="1"/></svg>
</div>
<svg style="left:0;top:0" width="974" height="624"><rect x="651.2" y="455.1" width="296.79999999999995" height="56.5" fill="none" stroke="#fff" stroke-opacity=".75" stroke-width="1.600"/><rect x="652.7" y="456.6" width="293.79999999999995" height="53.5" fill="#fff" stroke="#4f55a2" stroke-width="2"/><path d="M702 456.600 L728.500 420.500 L799 456.600" fill="#fff" stroke="#4f55a2" stroke-width="2" stroke-linejoin="miter"/><rect x="703.500" y="455.600" width="94" height="3" fill="#fff"/></svg><div class="call" style="left:651.2px;width:295.79999999999995px;top:460.8px;font-size:19.75px">The distance has been typed in<br>12.545 meters</div>
<svg style="left:790px;top:369px" width="17" height="26.500" viewBox="0 0 16 25"><path d="M1.500 1.500 L1.500 19 L5.500 15.500 L9 23 L12 21.800 L8.700 14.500 L14 14.500 Z" fill="#fff" stroke="#111" stroke-width="1" stroke-linejoin="round"/></svg>
</body></html>
